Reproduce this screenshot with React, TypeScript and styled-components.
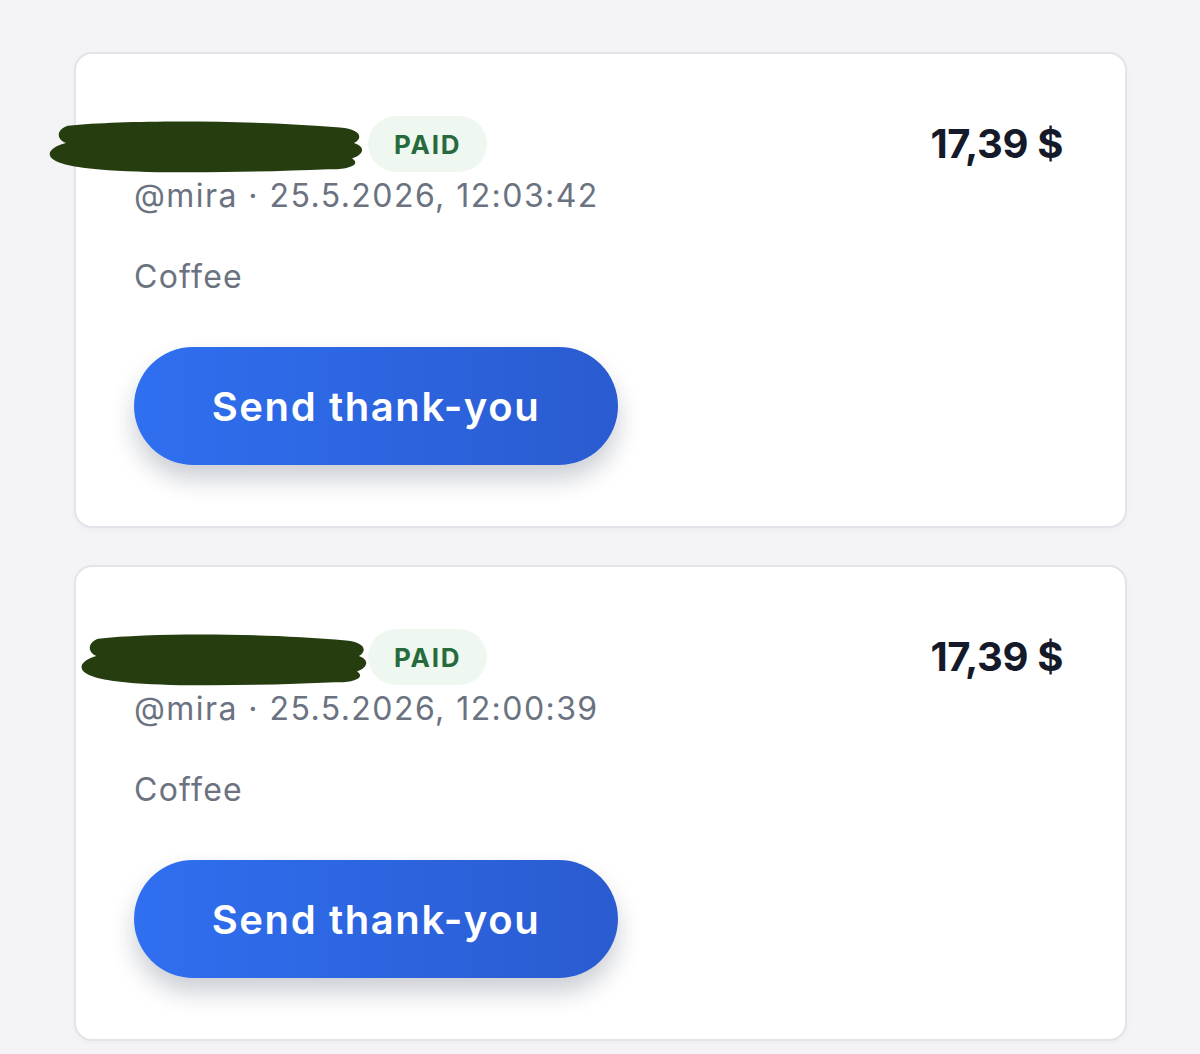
import { FC } from "react";
import styled, { createGlobalStyle } from "styled-components";

interface Payment {
  id: number;
  handle: string;
  time: string;
  note: string;
  amount: string;
  scribble: { width: number; left: number };
}

const payments: Payment[] = [
  {
    id: 1,
    handle: "@mira",
    time: "25.5.2026, 12:03:42",
    note: "Coffee",
    amount: "17,39 $",
    scribble: { width: 316, left: -86 },
  },
  {
    id: 2,
    handle: "@mira",
    time: "25.5.2026, 12:00:39",
    note: "Coffee",
    amount: "17,39 $",
    scribble: { width: 288, left: -54 },
  },
];

const GlobalStyle = createGlobalStyle`
  body {
    margin: 0;
    background: #f4f4f6;
    font-family: Inter, "Noto Sans", "Liberation Sans", sans-serif;
  }
`;

const Scribble: FC<{ width: number; left: number }> = ({ width, left }) => (
  <ScribbleSvg
    viewBox="0 0 316 60"
    preserveAspectRatio="none"
    $width={width}
    $left={left}
  >
    <path
      d="M20 10 C80 4 200 4 292 12 C312 14 316 22 306 28 C318 32 316 40 304 44 C314 50 300 56 280 55 C210 58 120 60 60 56 C30 54 10 50 4 44 C-2 38 4 32 18 28 C8 24 8 14 20 10 Z"
      fill="#263d0f"
    />
  </ScribbleSvg>
);

const PaymentCard: FC<{ payment: Payment }> = ({ payment }) => (
  <Card>
    <Header>
      <Info>
        <TitleRow>
          <Name>
            <Scribble {...payment.scribble} />
          </Name>
          <Badge>PAID</Badge>
        </TitleRow>
        <Meta>
          {payment.handle} · {payment.time}
        </Meta>
      </Info>
      <Amount>{payment.amount}</Amount>
    </Header>
    <Note>{payment.note}</Note>
    <ThankButton type="button">Send thank-you</ThankButton>
  </Card>
);

const App: FC = () => (
  <>
    <GlobalStyle />
    <List>
      {payments.map((p) => (
        <PaymentCard key={p.id} payment={p} />
      ))}
    </List>
  </>
);

const List = styled.main`
  display: flex;
  flex-direction: column;
  gap: 37px;
  padding: 52px 73px 20px 74px;
`;

const Card = styled.section`
  display: flex;
  flex-direction: column;
  align-items: flex-start;
  padding: 62px 62px 61px 58px;
  background: #ffffff;
  border: 2px solid #e3e3e9;
  border-radius: 18px;
  box-shadow: 0 2px 6px rgba(0, 0, 0, 0.03);
`;

const Header = styled.div`
  display: flex;
  justify-content: space-between;
  align-items: flex-start;
  align-self: stretch;
`;

const Info = styled.div`
  display: flex;
  flex-direction: column;
`;

const TitleRow = styled.div`
  display: flex;
  align-items: center;
  gap: 6px;
`;

const Name = styled.span`
  position: relative;
  width: 228px;
  height: 56px;
`;

const ScribbleSvg = styled.svg<{ $width: number; $left: number }>`
  position: absolute;
  top: 0;
  left: ${(p) => p.$left}px;
  width: ${(p) => p.$width}px;
  height: 58px;
`;

const Badge = styled.span`
  display: inline-flex;
  align-items: center;
  height: 56px;
  padding: 0 26px;
  border-radius: 28px;
  background: #eef8f0;
  color: #276b3c;
  font-size: 26px;
  font-weight: 700;
  letter-spacing: 0.07em;
`;

const Meta = styled.div`
  margin-top: 2px;
  font-size: 32px;
  line-height: 44px;
  color: #6b7280;
  letter-spacing: 0.045em;
`;

const Amount = styled.div`
  height: 56px;
  line-height: 56px;
  font-size: 40px;
  font-weight: 700;
  color: #151a2a;
  letter-spacing: -0.01em;
`;

const Note = styled.div`
  margin-top: 39px;
  font-size: 32px;
  line-height: 40px;
  color: #6b7280;
  letter-spacing: 0.04em;
`;

const ThankButton = styled.button`
  margin-top: 50px;
  width: 484px;
  height: 118px;
  border: none;
  border-radius: 59px;
  background: linear-gradient(90deg, #2f6ff0 0%, #2a5bd0 100%);
  box-shadow: 0 14px 24px rgba(20, 30, 60, 0.22);
  color: #ffffff;
  font-family: inherit;
  font-size: 40px;
  font-weight: 600;
  letter-spacing: 0.04em;
  cursor: pointer;
`;

export default App;
